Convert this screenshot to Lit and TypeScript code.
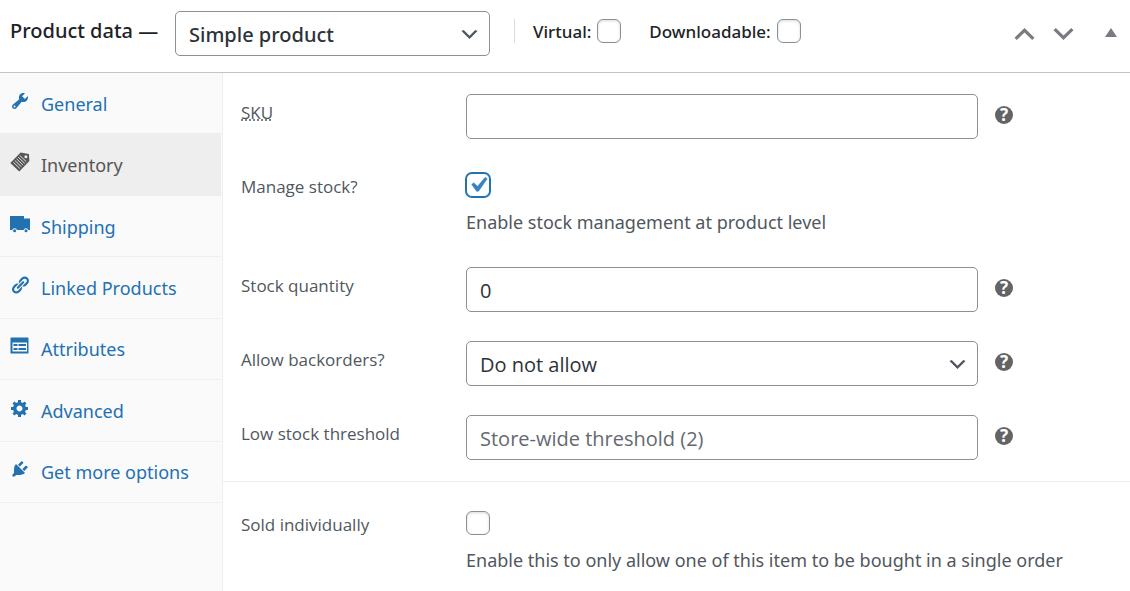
import { LitElement, html, css, svg } from "lit";
import { customElement, state } from "lit/decorators.js";

const icons: Record<string, unknown> = {
  wrench: svg`<path fill-rule="evenodd" d="M16.68 9.77c-1.34 1.34-3.3 1.67-4.95.99l-5.41 6.52c-.99.99-2.59.99-3.58 0s-.99-2.59 0-3.57l6.52-5.42c-.68-1.65-.35-3.61.99-4.95 1.28-1.28 3.12-1.62 4.72-1.06l-2.89 2.89 2.82 2.82 2.86-2.87c.53 1.58.18 3.39-1.08 4.65zM3.81 16.21c.4.39 1.04.39 1.43 0 .4-.4.4-1.04 0-1.43-.39-.4-1.03-.4-1.43 0-.39.39-.39 1.03 0 1.43z"/>`,
  tag: svg`<path d="M10.600 .6L18.900 1.900L19.400 9L9.300 19.600L.3 11z"/>
    <path fill="none" stroke="#eee" stroke-width=".9" d="M3.300 10.200l6.600 6.300M4.900 8.500l6.600 6.300M6.500 6.800l6.600 6.300M8.100 5.100l6.600 6.300M9.700 3.400l6.600 6.300"/>
    <circle cx="15.900" cy="4.800" r="1.500" fill="#eee"/>`,
  truck: svg`<path d="M0 2h14v2.500h6V16h-1.600a2.500 2.500 0 0 0-4.800 0H7a2.500 2.500 0 0 0-4.800 0H0z"/><circle cx="4.600" cy="16.700" r="1.500"/><circle cx="16" cy="16.700" r="1.500"/>`,
  link: svg`<path d="M17.74 2.76c1.68 1.69 1.68 4.41 0 6.1l-1.53 1.52c-1.12 1.12-2.7 1.47-4.14 1.09l2.62-2.61.76-.77.76-.76c.84-.84.84-2.2 0-3.04-.84-.85-2.2-.85-3.04 0l-.77.76-3.38 3.38c-.37-1.44-.02-3.02 1.1-4.14l1.52-1.53c1.69-1.68 4.42-1.68 6.1 0zM8.59 13.43l5.34-5.34c.42-.42.42-1.1 0-1.52-.44-.43-1.13-.39-1.53 0l-5.33 5.34c-.42.42-.42 1.1 0 1.52.44.43 1.13.39 1.52 0zm-.76 2.29l4.14-4.15c.38 1.44.03 3.02-1.09 4.14l-1.52 1.53c-1.69 1.68-4.41 1.68-6.1 0-1.68-1.68-1.68-4.42 0-6.1l1.53-1.52c1.12-1.12 2.7-1.47 4.14-1.1l-4.14 4.15c-.85.84-.85 2.2 0 3.05.84.84 2.2.84 3.04 0z"/>`,
  list: svg`<path fill-rule="evenodd" d="M1 1.500h17q.5 0 .5.5v15q0 .5-.5.5H1q-.5 0-.5-.5V2q0-.5.5-.5zM2.500 6.500v9h14.500v-9z"/><path d="M3.500 8h4v2h-4zM8.500 8h7.500v2H8.500zM3.500 12h4v2h-4zM8.500 12h7.500v2H8.500z"/>`,
  gear: svg`<path d="M18 12h-2.18c-.17.7-.44 1.35-.81 1.93l1.54 1.54-2.1 2.1-1.54-1.54c-.58.36-1.23.63-1.91.79V19H8v-2.18c-.68-.16-1.33-.43-1.91-.79l-1.54 1.54-2.12-2.12 1.54-1.54c-.36-.58-.63-1.23-.79-1.91H1V9.03h2.17c.16-.7.44-1.35.8-1.94L2.43 5.55l2.1-2.1 1.54 1.54c.58-.37 1.24-.64 1.93-.81V2h3v2.18c.68.16 1.33.43 1.91.79l1.54-1.54 2.12 2.12-1.54 1.54c.36.59.64 1.24.8 1.94H18V12zm-8.5 1.5c1.66 0 3-1.34 3-3s-1.34-3-3-3-3 1.34-3 3 1.34 3 3 3z"/>`,
  plug: svg`<path d="M13.11 4.36L9.87 7.6 8 5.73l3.24-3.24c.35-.34 1.05-.2 1.56.32.52.51.66 1.21.31 1.55zm-8 1.77l.91-1.12 9.01 9.01-1.19.84c-.71.71-2.63 1.16-3.82 1.16H6.14L4.9 17.26c-.59.59-1.54.59-2.12 0-.59-.58-.59-1.53 0-2.12l1.24-1.24v-3.88c0-1.13.4-3.19 1.09-3.89zm7.26 3.97l3.24-3.24c.34-.35 1.04-.21 1.55.31.52.51.66 1.21.31 1.55l-3.24 3.25z"/>`,
};

const tabs = [
  { id: "general", label: "General", icon: "wrench" },
  { id: "inventory", label: "Inventory", icon: "tag" },
  { id: "shipping", label: "Shipping", icon: "truck" },
  { id: "linked", label: "Linked Products", icon: "link" },
  { id: "attributes", label: "Attributes", icon: "list" },
  { id: "advanced", label: "Advanced", icon: "gear" },
  { id: "more", label: "Get more options", icon: "plug" },
];

@customElement("app-root")
export class AppRoot extends LitElement {
  @state() private active = "inventory";

  static styles = css`
    :host {
      display: flex;
      flex-direction: column;
      min-height: 100vh;
      overflow: hidden;
      background: #fff;
      color: #50575e;
      font-family: "Noto Sans", "Open Sans", sans-serif;
      font-size: 18px;
    }
    *, *::before { box-sizing: border-box; }
    button { padding: 0; border: 0; background: none; font: inherit; color: inherit; cursor: pointer; }
    svg { display: block; fill: currentColor; }

    .header {
      display: flex;
      align-items: flex-start;
      padding: 11px 12px 16px 10px;
      border-bottom: 1px solid #c3c4c7;
      color: #1d2327;
    }
    .title { flex: none; width: 165px; margin: 0; font-size: 20px; font-weight: 500; line-height: 40px; white-space: nowrap; }
    .select { position: relative; display: block; }
    .select svg { position: absolute; right: 9px; top: 12px; color: #50575e; pointer-events: none; }
    .type { width: 315px; }
    .type .control { font-family: inherit; font-weight: 500; }
    .flags { display: flex; gap: 28px; margin: 8px 0 0 24px; padding-left: 18px; border-left: 1px solid #dcdcde; }
    .flag { display: flex; align-items: center; gap: 6px; height: 24px; font-size: 17px; font-weight: 500; white-space: nowrap; }
    .order { display: flex; align-items: center; gap: 18px; margin: 13px 0 0 auto; color: #787c82; }
    .toggle { margin-left: 12px; }

    .control {
      display: block;
      width: 100%;
      height: 45px;
      margin: 0;
      padding: 2px 13px 0;
      border: 1px solid #8c8f94;
      border-radius: 5px;
      background: #fff;
      color: #2c3338;
      font: inherit;
      font-family: "Open Sans", "Noto Sans", sans-serif;
      font-size: 20px;
      appearance: none;
    }
    .control::placeholder { color: #646970; opacity: 1; }
    .check {
      flex: none;
      width: 24px;
      height: 24px;
      margin: 0;
      border: 1px solid #8c8f94;
      border-radius: 6px;
      background: #fff;
      box-shadow: inset 0 1px 3px rgba(0, 0, 0, 0.15);
      appearance: none;
    }
    .check:checked {
      border-color: #2271b1;
      background: #fff url("data:image/svg+xml,%3Csvg xmlns='http://www.w3.org/2000/svg' viewBox='0 0 20 20'%3E%3Cpath d='M14.83 4.89l1.34.94-5.81 8.38H9.02L5.78 9.67l1.34-1.25 2.57 2.4z' fill='%233582c4' stroke='%233582c4' stroke-width='.3'/%3E%3C/svg%3E") center / 30px no-repeat;
      box-shadow: 0 0 0 1px #2271b1;
    }

    .body { display: flex; flex: 1; }
    .sidebar { flex: none; width: 223px; border-right: 1px solid #eee; background: #fafafa; }
    .tabs { display: grid; grid-auto-rows: 1fr; height: 430px; margin: 0 1px 0 0; padding: 0; list-style: none; }
    .tabs li { display: grid; }
    .tab {
      display: flex;
      align-items: center;
      gap: 11px;
      padding: 1px 0 0 10px;
      border-bottom: 1px solid #eee;
      color: #2271b1;
      text-decoration: none;
      white-space: nowrap;
    }
    .tab svg { margin-bottom: 6px; }
    .tab.on { background: #eee; color: #555; }

    .panel { flex: 1; min-width: 0; }
    .group { display: grid; gap: 29px; padding: 21px 0 21px 18px; }
    .group + .group { padding-top: 24px; border-top: 1px solid #eee; }
    .field { display: grid; grid-template-columns: 225px minmax(0, 1fr) 152px; }
    .name { font-family: "Open Sans", "Noto Sans", sans-serif; font-size: 17px; line-height: 37px; }
    .name abbr { text-decoration: underline dotted; }
    .field .check { margin-top: 5px; }
    .desc { grid-column: 2 / -1; margin-top: 2px; line-height: 31px; white-space: nowrap; }
    .help { width: 18px; height: 18px; margin: 12px 0 0 17px; border-radius: 50%; background: #646464; color: #fff; font-size: 17px; font-weight: 700; line-height: 18px; }
  `;

  private chevron() {
    return html`<svg width="23" height="23" viewBox="0 0 20 20" aria-hidden="true"><path d="M5 6l5 5 5-5 2 1-7 7-7-7 2-1z"/></svg>`;
  }

  private help(topic: string) {
    return html`<button class="help" type="button" aria-label="Help: ${topic}">?</button>`;
  }

  render() {
    return html`
      <header class="header">
        <h2 class="title">Product data —</h2>
        <div class="select type">
          <select class="control" aria-label="Product type">
            <option>Simple product</option>
          </select>
          ${this.chevron()}
        </div>
        <div class="flags">
          <label class="flag">Virtual:<input class="check" type="checkbox" /></label>
          <label class="flag">Downloadable:<input class="check" type="checkbox" /></label>
        </div>
        <div class="order">
          <button type="button" aria-label="Move up">
            <svg width="21" height="20" viewBox="0 0 21 20"><path d="M10.500 4L20.500 13.700 18.200 16 10.500 8.600 2.800 16 .5 13.700z"/></svg>
          </button>
          <button type="button" aria-label="Move down">
            <svg width="21" height="20" viewBox="0 0 21 20"><path d="M10.500 16L20.500 6.300 18.200 4 10.500 11.400 2.800 4 .5 6.300z"/></svg>
          </button>
          <button class="toggle" type="button" aria-label="Toggle panel">
            <svg width="14" height="20" viewBox="0 0 14 20"><path d="M7 4l6 9H1z"/></svg>
          </button>
        </div>
      </header>
      <div class="body">
        <nav class="sidebar" aria-label="Product data">
          <ul class="tabs">
            ${tabs.map(
              (t) => html`<li>
                <a class="tab ${t.id === this.active ? "on" : ""}" href="#${t.id}" @click=${() => (this.active = t.id)}>
                  <svg width="20" height="20" viewBox="0 0 20 20" aria-hidden="true">${icons[t.icon]}</svg>${t.label}
                </a>
              </li>`
            )}
          </ul>
        </nav>
        <main class="panel">
          <div class="group">
            <div class="field">
              <label class="name" for="sku"><abbr title="Stock Keeping Unit">SKU</abbr></label>
              <input class="control" id="sku" type="text" />
              ${this.help("SKU")}
            </div>
            <div class="field">
              <label class="name" for="manage">Manage stock?</label>
              <input class="check" id="manage" type="checkbox" checked aria-describedby="manage-desc" />
              <span class="desc" id="manage-desc">Enable stock management at product level</span>
            </div>
            <div class="field">
              <label class="name" for="qty">Stock quantity</label>
              <input class="control" id="qty" type="text" inputmode="numeric" value="0" />
              ${this.help("Stock quantity")}
            </div>
            <div class="field">
              <label class="name" for="backorders">Allow backorders?</label>
              <div class="select">
                <select class="control" id="backorders">
                  <option>Do not allow</option>
                </select>
                ${this.chevron()}
              </div>
              ${this.help("Allow backorders?")}
            </div>
            <div class="field">
              <label class="name" for="low">Low stock threshold</label>
              <input class="control" id="low" type="text" placeholder="Store-wide threshold (2)" />
              ${this.help("Low stock threshold")}
            </div>
          </div>
          <div class="group">
            <div class="field">
              <label class="name" for="sold">Sold individually</label>
              <input class="check" id="sold" type="checkbox" aria-describedby="sold-desc" />
              <span class="desc" id="sold-desc">Enable this to only allow one of this item to be bought in a single order</span>
            </div>
          </div>
        </main>
      </div>
    `;
  }
}
